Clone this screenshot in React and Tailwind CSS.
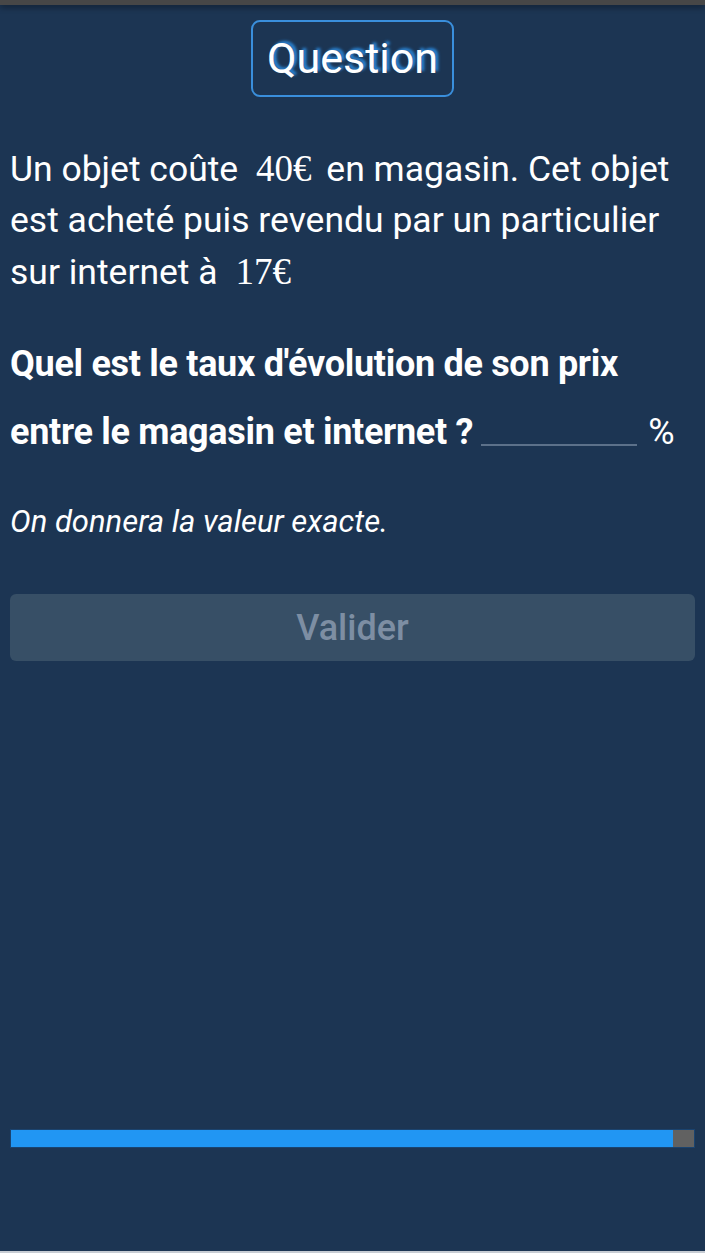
export default function App() {
  return (
    <div
      className="relative w-full h-[1253px] bg-[#1c3553] text-white flex flex-col overflow-hidden"
      style={{ fontFamily: "Roboto, 'Liberation Sans', sans-serif" }}
    >
      <div className="h-[5px] bg-[#474747] shadow-[0_2px_6px_rgba(0,0,0,0.45)] shrink-0" />

      <div className="flex justify-center pt-[15px]">
        <div className="w-[203px] h-[77px] border-2 border-[#3a8fdc] rounded-[9px] flex items-center justify-center">
          <span className="text-[43px] leading-none [text-shadow:3px_-2px_3px_#2a86d8]">Question</span>
        </div>
      </div>

      <div className="px-[10px] pt-[46px]">
        <p className="text-[35.5px] leading-[51px]">
          Un objet coûte{" "}
          <span className="pl-[9px] pr-[6px] text-[37px]" style={{ fontFamily: "'Liberation Serif', serif" }}>40€</span>{" "}
          en magasin. Cet objet est acheté puis revendu par un particulier sur internet à{" "}
          <span className="pl-[9px] text-[37px]" style={{ fontFamily: "'Liberation Serif', serif" }}>17€</span>
        </p>

        <p className="mt-[32px] text-[36px] font-bold leading-[68px] tracking-[-0.3px]">
          Quel est le taux d'évolution de son prix entre le magasin et internet ?
          <span className="inline-block w-[156px] h-[2px] bg-[#5c718a] align-[-2px] ml-[8px] mr-[11px]" />
          <span className="font-normal">%</span>
        </p>

        <p className="mt-[41px] text-[31px] italic leading-[30px]">On donnera la valeur exacte.</p>

        <div className="mt-[57px] h-[67px] rounded-[6px] bg-[#374f66] flex items-center justify-center">
          <span className="text-[36px] font-medium text-[#7d8ea3]">Valider</span>
        </div>
      </div>

      <div className="flex-1" />

      <div className="px-[10px] mb-[103px]">
        <div className="h-[19px] flex border border-[#1a5a9c]/40">
          <div className="w-[662px] bg-[#2196f3]" />
          <div className="flex-1 bg-[#616161]" />
        </div>
      </div>

      <div className="h-[2px] bg-[#c7ccd3] shrink-0" />
    </div>
  );
}
